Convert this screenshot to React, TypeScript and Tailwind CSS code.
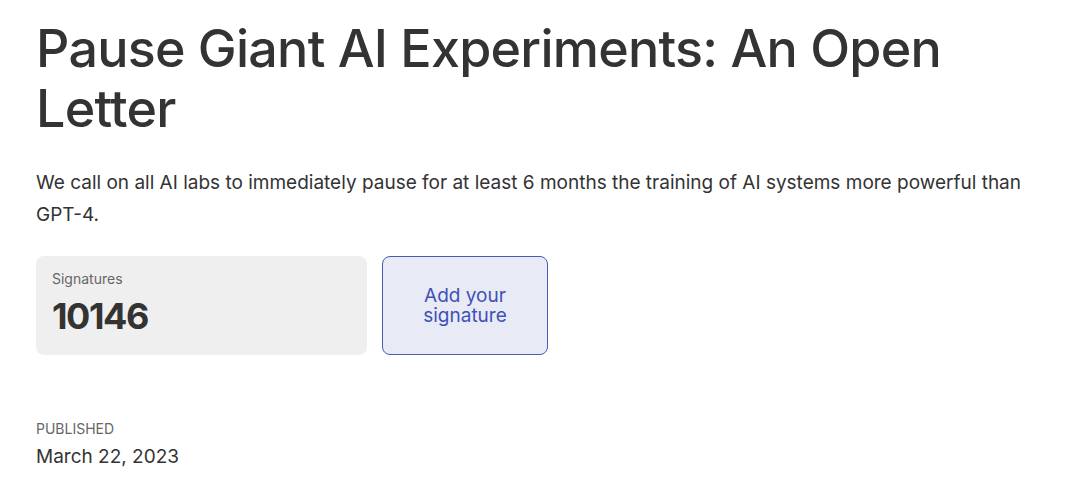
export default function App() {
  return (
    <div className="min-h-[495px] bg-white px-9 pt-[19px] text-[#333333]" style={{ fontFamily: 'Inter, "Noto Sans", sans-serif' }}>
      <h1 className="text-[52px] font-medium leading-[60px] tracking-[-0.75px]">
        Pause Giant AI Experiments: An Open Letter
      </h1>
      <p className="mt-[28px] text-[19px] leading-[32px] text-[#333333]">
        We call on all AI labs to immediately pause for at least 6 months the training of AI systems more powerful than GPT-4.
      </p>
      <div className="mt-[25px] flex gap-[15px]">
        <div className="flex h-[99px] w-[331px] flex-col rounded-lg bg-[#efefef] px-4 pt-[13px]">
          <div className="text-[14px] leading-5 text-[#666666]">Signatures</div>
          <div className="mt-[7px] text-[36px] font-bold leading-10 tracking-[-1.4px] text-[#333333]">10146</div>
        </div>
        <button className="flex h-[99px] w-[166px] items-center justify-center rounded-lg border border-[#4a5ab5] bg-[#e8eaf6] text-center text-[19px] leading-[20px] text-[#3f51b5]">
          Add your
          <br />
          signature
        </button>
      </div>
      <div className="mt-[64px] text-[14px] uppercase leading-5 text-[#666666]">Published</div>
      <div className="mt-[6px] text-[19px] leading-6 text-[#333333]">March 22, 2023</div>
    </div>
  );
}
